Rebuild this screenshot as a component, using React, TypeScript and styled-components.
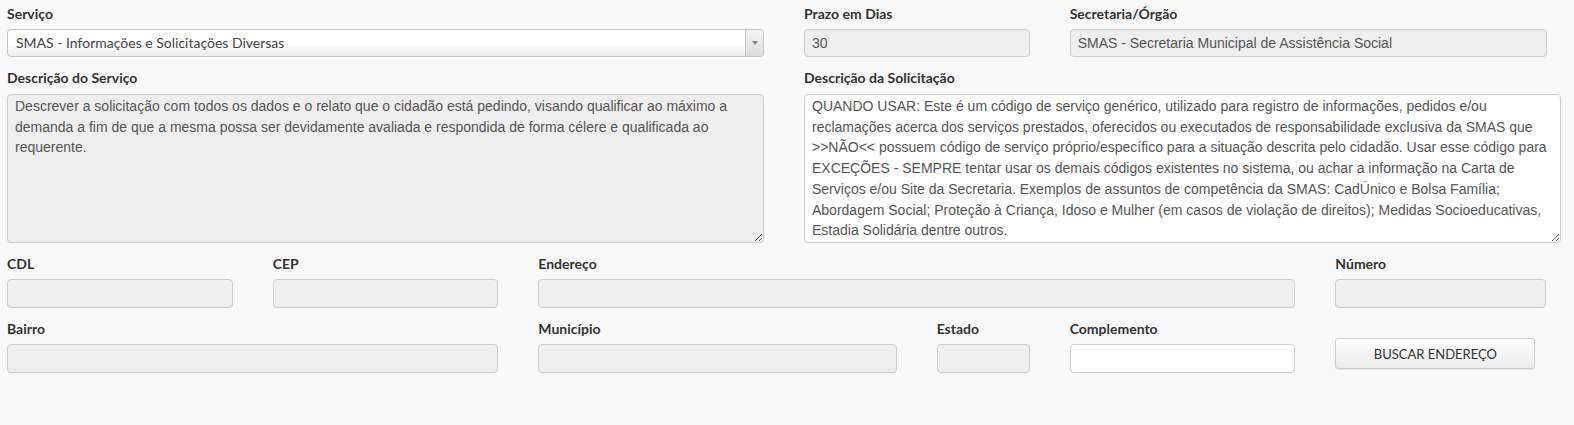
import React from 'react';
import styled, { createGlobalStyle } from 'styled-components';

const GlobalStyle = createGlobalStyle`
  html, body {
    margin: 0;
    padding: 0;
    background: #f9f9f9;
  }
  * {
    box-sizing: border-box;
  }
`;

const Page = styled.div`
  height: 425px;
  background: #f9f9f9;
  padding: 5px 13px 0 7px;
  font-family: Lato, "Open Sans", sans-serif;
`;

const FormGrid = styled.div`
  display: grid;
  grid-template-columns: repeat(6, 1fr);
  column-gap: 40px;
  row-gap: 12px;
`;

const Field = styled.div<{ span?: number }>`
  display: flex;
  flex-direction: column;
  grid-column: span ${(p) => p.span || 1};
  min-width: 0;
`;

const SubRow = styled.div<{ span?: number }>`
  display: flex;
  gap: 40px;
  grid-column: span ${(p) => p.span || 1};
  min-width: 0;
`;

const Label = styled.label`
  display: block;
  height: 18px;
  line-height: 18px;
  margin-bottom: 6px;
  font-family: Lato, "Open Sans", sans-serif;
  font-size: 14px;
  font-weight: 700;
  color: #333;
  white-space: nowrap;
`;

const Spacer = styled.div`
  height: 18px;
`;

const Input = styled.input<{ h?: number; w?: string; light?: boolean }>`
  display: block;
  width: ${(p) => p.w || '100%'};
  height: ${(p) => p.h || 29}px;
  padding: 4px 7px;
  border: 1px solid #cfcfcf;
  border-radius: 4px;
  background: ${(p) => (p.light ? '#fff' : '#eee')};
  font-family: "Liberation Sans", Arial, sans-serif;
  font-size: 14px;
  color: #555;
  outline: none;
`;

const TextArea = styled.textarea<{ light?: boolean }>`
  display: block;
  width: 100%;
  height: 149px;
  margin-top: 1px;
  padding: 1px 7px 4px;
  border: 1px solid #cfcfcf;
  border-radius: 4px;
  background: ${(p) => (p.light ? '#fff' : '#eee')};
  font-family: "Liberation Sans", Arial, sans-serif;
  font-size: 14px;
  line-height: 20.7px;
  color: #555;
  resize: both;
  outline: none;
  overflow: hidden;
`;

const SelectBox = styled.div`
  display: flex;
  align-items: stretch;
  height: 28px;
  border: 1px solid #c8c8c8;
  border-radius: 4px;
  background: linear-gradient(to bottom, #ffffff 0%, #ffffff 50%, #eeeeee 100%);
  overflow: hidden;
`;

const SelectText = styled.span`
  flex: 1;
  padding: 0 8px;
  line-height: 26px;
  font-family: Lato, "Open Sans", sans-serif;
  font-size: 14px;
  color: #444;
  white-space: nowrap;
  overflow: hidden;
`;

const SelectArrow = styled.span`
  width: 18px;
  display: flex;
  align-items: center;
  justify-content: center;
  border-left: 1px solid #c8c8c8;
  background: linear-gradient(to bottom, #f3f3f3 0%, #dddddd 100%);

  &::after {
    content: '';
    width: 0;
    height: 0;
    border-left: 3px solid transparent;
    border-right: 3px solid transparent;
    border-top: 4px solid #888;
  }
`;

const Button = styled.button`
  width: 200px;
  height: 31px;
  border: 1px solid #cfcfcf;
  border-radius: 3px;
  background: linear-gradient(to bottom, #ffffff 0%, #eaeaea 100%);
  box-shadow: 0 1px 1px rgba(0, 0, 0, 0.08);
  font-family: Lato, "Open Sans", sans-serif;
  font-size: 13px;
  color: #333;
  cursor: pointer;
`;

const servico =
  'Descrever a solicitação com todos os dados e o relato que o cidadão está pedindo, visando qualificar ao máximo a demanda a fim de que a mesma possa ser devidamente avaliada e respondida de forma célere e qualificada ao requerente.';

const solicitacao =
  'QUANDO USAR: Este é um código de serviço genérico, utilizado para registro de informações, pedidos e/ou reclamações acerca dos serviços prestados, oferecidos ou executados de responsabilidade exclusiva da SMAS que >>NÃO<< possuem código de serviço próprio/específico para a situação descrita pelo cidadão. Usar esse código para EXCEÇÕES - SEMPRE tentar usar os demais códigos existentes no sistema, ou achar a informação na Carta de Serviços e/ou Site da Secretaria. Exemplos de assuntos de competência da SMAS: CadÚnico e Bolsa Família; Abordagem Social; Proteção à Criança, Idoso e Mulher (em casos de violação de direitos); Medidas Socioeducativas, Estadia Solidária dentre outros.';

const App: React.FC = () => {
  return (
    <>
      <GlobalStyle />
      <Page>
        <FormGrid>
          <Field span={3}>
            <Label>Serviço</Label>
            <SelectBox>
              <SelectText>SMAS - Informações e Solicitações Diversas</SelectText>
              <SelectArrow />
            </SelectBox>
          </Field>
          <Field>
            <Label>Prazo em Dias</Label>
            <Input h={28} readOnly value="30" />
          </Field>
          <Field span={2}>
            <Label>Secretaria/Órgão</Label>
            <Input
              h={28}
              w="calc(100% - 14px)"
              readOnly
              value="SMAS - Secretaria Municipal de Assistência Social"
            />
          </Field>

          <Field span={3}>
            <Label>Descrição do Serviço</Label>
            <TextArea readOnly value={servico} />
          </Field>
          <Field span={3}>
            <Label>Descrição da Solicitação</Label>
            <TextArea light readOnly value={solicitacao} />
          </Field>

          <Field>
            <Label>CDL</Label>
            <Input readOnly />
          </Field>
          <Field>
            <Label>CEP</Label>
            <Input readOnly />
          </Field>
          <Field span={3}>
            <Label>Endereço</Label>
            <Input readOnly />
          </Field>
          <Field>
            <Label>Número</Label>
            <Input w="calc(100% - 15px)" readOnly />
          </Field>

          <Field span={2}>
            <Label>Bairro</Label>
            <Input readOnly />
          </Field>
          <SubRow span={2}>
            <Field style={{ flex: 1 }}>
              <Label>Município</Label>
              <Input readOnly />
            </Field>
            <Field>
              <Label>Estado</Label>
              <Input w="93px" readOnly />
            </Field>
          </SubRow>
          <Field>
            <Label>Complemento</Label>
            <Input light />
          </Field>
          <Field>
            <Spacer />
            <Button>BUSCAR ENDEREÇO</Button>
          </Field>
        </FormGrid>
      </Page>
    </>
  );
};

export default App;
